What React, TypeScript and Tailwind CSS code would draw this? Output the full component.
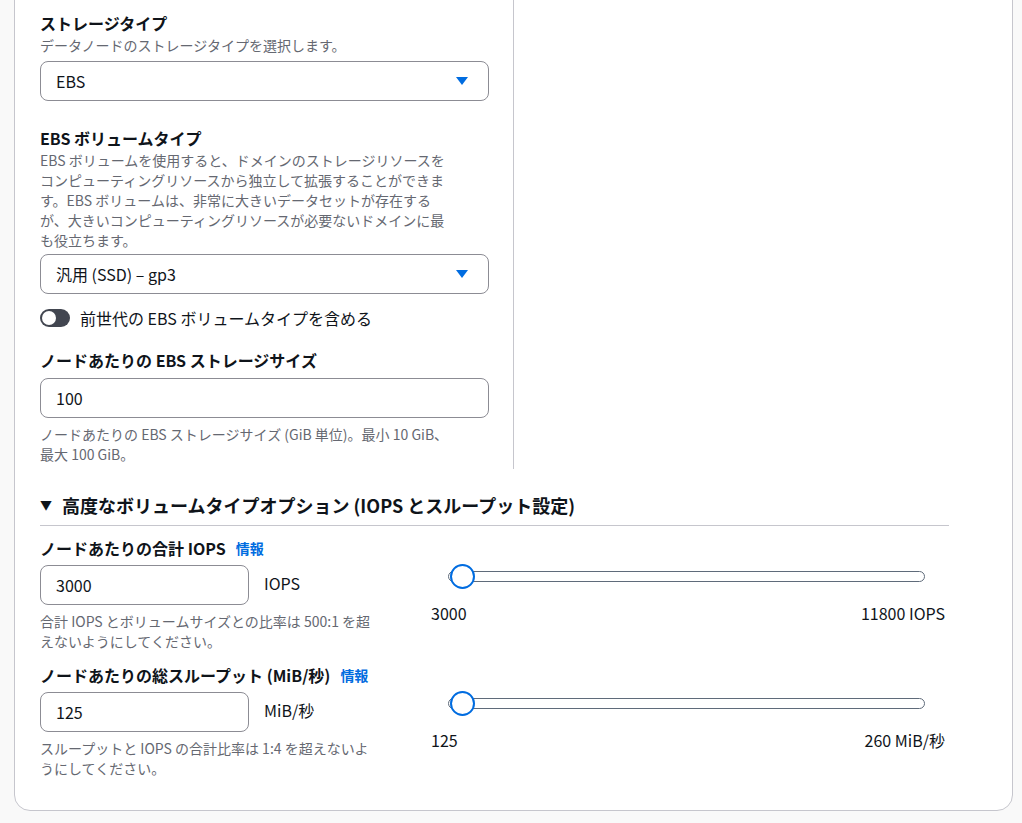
import React from "react";

const F = { fontFamily: '"Noto Sans CJK JP", "Noto Sans", sans-serif' };

function Caret() {
  return (
    <svg width="14" height="10" viewBox="0 0 14 10"><path d="M1 1h12L7 9z" fill="#006ce0" /></svg>
  );
}

function Select({ v }: { v: string }) {
  return (
    <div className="h-[40px] w-[449px] rounded-[8px] border border-[#8c8c94] bg-white flex items-center justify-between pl-[15px] pr-[19px] text-[16px] text-[#0f141a]">
      <span>{v}</span>
      <Caret />
    </div>
  );
}

function Slider({ min, max }: { min: string; max: string }) {
  return (
    <div className="w-[514px]">
      <div className="relative h-[24px] ml-[17px] mr-[20px]">
        <div className="absolute left-0 right-0 top-[6px] h-[11px] rounded-full border border-[#5f6b7a] bg-white" />
        <div className="absolute left-[2px] top-[-1px] w-[25px] h-[25px] rounded-full border-[2px] border-[#006ce0] bg-white" />
      </div>
      <div className="flex justify-between mt-[14px] text-[16px] text-[#0f141a] leading-[20px]">
        <span>{min}</span><span>{max}</span>
      </div>
    </div>
  );
}

function Row({ label, value, unit, hint, min, max }: any) {
  return (
    <div>
      <div className="text-[16px] font-bold text-[#0f141a] leading-[22px] flex items-center gap-[10px]">
        {label}<span className="text-[14px] text-[#006ce0] font-bold">情報</span>
      </div>
      <div className="flex mt-[6px]">
        <div className="w-[391px]">
          <div className="flex">
            <div className="h-[40px] w-[209px] rounded-[8px] border border-[#8c8c94] bg-white flex items-center pl-[15px] text-[16px] text-[#0f141a]">{value}</div>
            <div className="ml-[15px] mt-[6px] text-[16px] text-[#0f141a]">{unit}</div>
          </div>
          <div className="mt-[6px] w-[370px] text-[14px] leading-[20px] text-[#656871]">{hint}</div>
        </div>
        <Slider min={min} max={max} />
      </div>
    </div>
  );
}

export default function App() {
  return (
    <div style={F} className="w-[1022px] h-[823px] bg-[#f9f9f9] overflow-hidden relative">
      <div className="absolute left-[14px] right-[9px] top-[-20px] h-[831px] bg-white border border-[#c6c6cd] rounded-b-[16px]">
        <div className="flex">
          <div className="w-[499px] border-r border-[#c6c6cd] pl-[25px] pt-[30px] pb-[8px] h-[488px]">
            <div className="text-[16px] font-bold leading-[24px] text-[#0f141a]">ストレージタイプ</div>
            <div className="text-[14px] leading-[20px] text-[#656871]">データノードのストレージタイプを選択します。</div>
            <div className="mt-[6px]"><Select v="EBS" /></div>
            <div className="text-[16px] font-bold leading-[24px] text-[#0f141a] mt-[25px]">EBS ボリュームタイプ</div>
            <div className="text-[14px] leading-[20px] text-[#656871] w-[449px]">
              EBS ボリュームを使用すると、ドメインのストレージリソースを<br />
              コンピューティングリソースから独立して拡張することができま<br />
              す。EBS ボリュームは、非常に大きいデータセットが存在する<br />
              が、大きいコンピューティングリソースが必要ないドメインに最<br />
              も役立ちます。
            </div>
            <div className="mt-[4px]"><Select v="汎用 (SSD) – gp3" /></div>
            <div className="flex items-center mt-[12px] gap-[10px]">
              <div className="w-[30px] h-[18px] rounded-full bg-[#424650] relative">
                <div className="absolute left-[2px] top-[2px] w-[14px] h-[14px] rounded-full bg-white" />
              </div>
              <span className="text-[16px] text-[#0f141a]">前世代の EBS ボリュームタイプを含める</span>
            </div>
            <div className="text-[16px] font-bold leading-[24px] text-[#0f141a] mt-[18px]">ノードあたりの EBS ストレージサイズ</div>
            <div className="mt-[6px] h-[40px] w-[449px] rounded-[8px] border border-[#8c8c94] flex items-center pl-[15px] text-[16px] text-[#0f141a]">100</div>
            <div className="mt-[6px] text-[14px] leading-[20px] text-[#656871]">ノードあたりの EBS ストレージサイズ (GiB 単位)。最小 10 GiB、<br />最大 100 GiB。</div>
          </div>
        </div>
        <div className="pl-[25px] w-[934px] mt-[22px]">
          <div className="flex items-center gap-[10px] text-[18px] font-bold text-[#0f141a] leading-[28px] pb-[6px] border-b border-[#c6c6cd]">
            <span className="text-[12px]">▼</span>高度なボリュームタイプオプション (IOPS とスループット設定)
          </div>
          <div className="mt-[11px]">
            <Row label="ノードあたりの合計 IOPS" value="3000" unit="IOPS" hint={<>合計 IOPS とボリュームサイズとの比率は 500:1 を超<br />えないようにしてください。</>} min="3000" max="11800 IOPS" />
          </div>
          <div className="mt-[13px]">
            <Row label="ノードあたりの総スループット (MiB/秒)" value="125" unit="MiB/秒" hint={<>スループットと IOPS の合計比率は 1:4 を超えないよ<br />うにしてください。</>} min="125" max="260 MiB/秒" />
          </div>
        </div>
      </div>
    </div>
  );
}
